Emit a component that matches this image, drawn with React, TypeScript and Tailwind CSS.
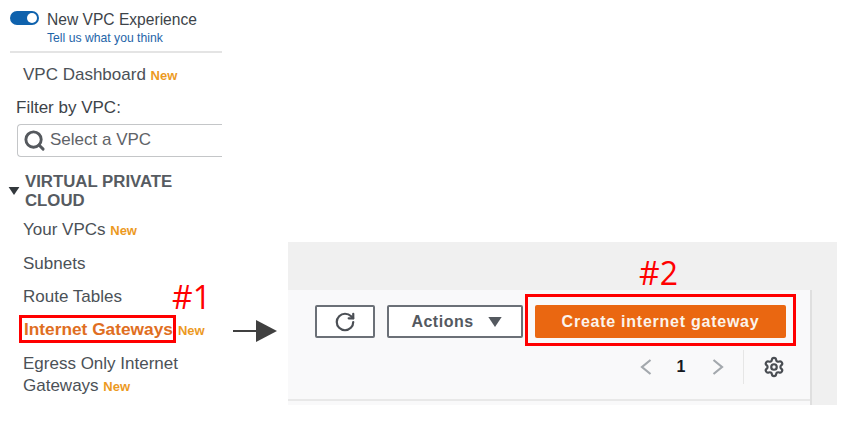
import { RotateCw, Search, Settings } from 'lucide-react'

function NewTag({ className = '' }: { className?: string }) {
  return <span className={`text-[13px] font-bold text-[#ec9a1f] ${className}`}>New</span>
}

export default function App() {
  return (
    <div className="relative flex h-[421px] w-[850px] overflow-hidden bg-white font-['Liberation_Sans',Arial,sans-serif]">
      {/* Sidebar */}
      <div className="w-[222px] shrink-0 text-[17px] text-[#4b5157]">
        <div className="flex gap-[8px] pl-[10px] pt-[11px]">
          <div className="flex h-[14px] w-[29px] items-center justify-end rounded-full bg-[#0f62ad] pr-[2px]">
            <div className="h-[10px] w-[10px] rounded-full bg-white" />
          </div>
          <div>
            <div className="text-[15.6px] leading-[18px] text-[#3d4349]">New VPC Experience</div>
            <div className="mt-[2px] text-[12.2px] leading-[14px] text-[#1e64a8]">Tell us what you think</div>
          </div>
        </div>

        <div className="ml-[10px] mt-[6px] h-[1.5px] bg-[#e4e4e4]" />

        <div className="mt-[13px] whitespace-nowrap pl-[23px] leading-[18px]">
          VPC Dashboard <NewTag />
        </div>
        <div className="mt-[14px] pl-[16px] leading-[18px] text-[#3d4349]">Filter by VPC:</div>

        <div className="ml-[17px] mt-[7px] flex h-[33px] items-center gap-[4px] rounded-l-[4px] border border-r-0 border-[#c4c6c8] pl-[5px] text-[#5f6368]">
          <Search size={23} strokeWidth={3} className="text-[#55595e]" />
          <span>Select a VPC</span>
        </div>

        <div className="mt-[15px] flex">
          <svg viewBox="0 0 12 10" className="ml-[8px] mt-[14px] h-[9px] w-[12px] shrink-0">
            <path d="M0 1 L12 1 L6 10 Z" fill="#33383d" />
          </svg>
          <div className="ml-[5px] text-[16.8px] font-bold leading-[19px] text-[#565b61]">
            VIRTUAL PRIVATE
            <br />
            CLOUD
          </div>
        </div>

        <div className="mt-[11px] flex flex-col pl-[23px] leading-[18px]">
          <div>
            Your VPCs <NewTag />
          </div>
          <div className="mt-[15px]">Subnets</div>
          <div className="mt-[15px]">Route Tables</div>
          <div className="mt-[14px] whitespace-nowrap">
            <span className="ml-[1px] text-[17.3px] font-bold text-[#df6e22]">Internet Gateways</span>
            <NewTag className="ml-[5px]" />
          </div>
          <div className="mt-[15px]">Egress Only Internet</div>
          <div className="mt-[4px]">
            Gateways <NewTag />
          </div>
        </div>
      </div>

      {/* Console panel */}
      <div className="ml-[66px] mt-[242px] h-[163px] w-[549px] shrink-0 bg-[#f0f0f0] pt-[48px]">
        <div className="h-[115px] w-[524px] border-r-2 border-[#dfdfdf] bg-[#f9f9fa]">
          <div className="h-[111px] border-b-2 border-[#e8e8e8]">
            <div className="flex gap-[12px] pl-[27px] pt-[15px]">
              <button className="flex h-[33px] w-[60px] items-center justify-center rounded-[2px] border-2 border-[#6b7077] bg-white text-[#4b4f55]">
                <RotateCw size={22} strokeWidth={2.4} />
              </button>
              <button className="flex h-[33px] w-[136px] items-center justify-center gap-[14px] rounded-[2px] border-2 border-[#6b7077] bg-white pl-[3px] text-[16px] font-bold tracking-[0.5px] text-[#54595f]">
                Actions
                <svg viewBox="0 0 12 9" className="h-[10px] w-[14px]">
                  <path d="M0 0 L12 0 L6 9 Z" fill="#54595f" />
                </svg>
              </button>
              <button className="h-[33px] w-[251px] rounded-[2px] bg-[#ea6711] text-[16px] font-bold tracking-[0.75px] text-[#fbf4ec]">
                Create internet gateway
              </button>
            </div>

            <div className="mt-[12px] flex h-[34px] items-center pl-[352px]">
              <svg viewBox="0 0 12 16" className="h-[16px] w-[12px]">
                <path d="M10.5 1 L2 8 L10.5 15" fill="none" stroke="#a3a8ad" strokeWidth="2.2" />
              </svg>
              <span className="ml-[24px] w-[10px] text-center text-[16px] font-bold text-[#16191f]">1</span>
              <svg viewBox="0 0 12 16" className="ml-[26px] h-[16px] w-[12px]">
                <path d="M1.5 1 L10 8 L1.5 15" fill="none" stroke="#a3a8ad" strokeWidth="2.2" />
              </svg>
              <div className="ml-[19px] h-[34px] w-[1px] bg-[#e6e6e6]" />
              <Settings size={22} strokeWidth={2.4} className="ml-[19px] text-[#4a4e53]" />
            </div>
          </div>
        </div>
      </div>

      {/* Annotations */}
      <div className="absolute left-[19px] top-[315px] h-[28px] w-[157px] border-[3px] border-[#ff0000]" />
      <div className="absolute left-[525px] top-[294px] h-[52px] w-[271px] border-[3px] border-[#ff0000]" />
      <div className="absolute left-[172px] top-[276px] font-['Open_Sans',sans-serif] text-[32px] font-medium leading-[42px] text-[#ff0000]">#1</div>
      <div className="absolute left-[639px] top-[252px] font-['Open_Sans',sans-serif] text-[32px] font-medium leading-[42px] text-[#ff0000]">#2</div>
      <svg viewBox="0 0 44 22" className="absolute left-[233px] top-[320px] h-[22px] w-[44px]">
        <path d="M0 11 H24" stroke="#404040" strokeWidth="2" />
        <path d="M23 0 L44 11 L23 22 Z" fill="#404040" />
      </svg>
    </div>
  )
}
